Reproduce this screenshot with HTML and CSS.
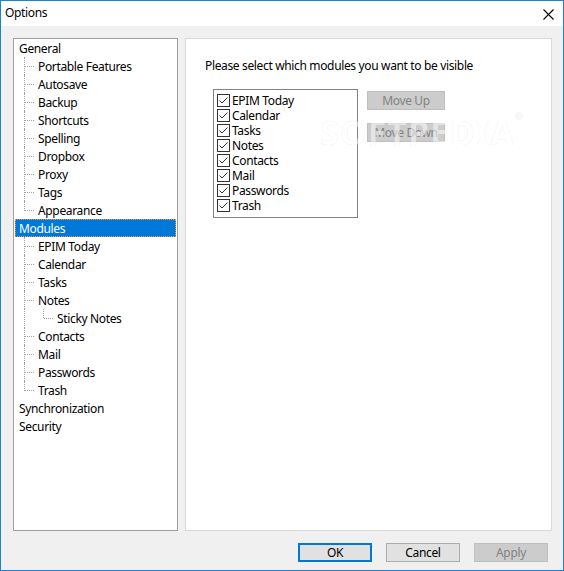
FILE: index.html
```html
<!DOCTYPE html>
<html>
<head>
<meta charset="utf-8">
<link rel="stylesheet" href="styles.css">
</head>
<body>
<div class="window">
  <div class="titlebar">
    <span class="title">Options</span>
    <svg class="close" width="11" height="11" viewBox="0 0 11 11"><path d="M0.5 0.5 L10.5 10.5 M10.5 0.5 L0.5 10.5" stroke="#000" stroke-width="1.1" fill="none"/></svg>
  </div>
  <div class="content">
    <div class="panels">
      <div class="tree">
        <div class="row top">General</div>
        <div class="row child">Portable Features</div>
        <div class="row child">Autosave</div>
        <div class="row child">Backup</div>
        <div class="row child">Shortcuts</div>
        <div class="row child">Spelling</div>
        <div class="row child">Dropbox</div>
        <div class="row child">Proxy</div>
        <div class="row child">Tags</div>
        <div class="row child last">Appearance</div>
        <div class="row top selected"><span class="sel">Modules</span></div>
        <div class="row child">EPIM Today</div>
        <div class="row child">Calendar</div>
        <div class="row child">Tasks</div>
        <div class="row child">Notes</div>
        <div class="row grand">Sticky Notes</div>
        <div class="row child">Contacts</div>
        <div class="row child">Mail</div>
        <div class="row child">Passwords</div>
        <div class="row child last">Trash</div>
        <div class="row top">Synchronization</div>
        <div class="row top">Security</div>
      </div>
      <div class="page">
        <div class="prompt">Please select which modules you want to be visible</div>
        <div class="modules">
          <div class="checklist">
            <div class="item"><svg class="cb" width="13" height="13" viewBox="0 0 13 13"><rect x="0.5" y="0.5" width="12" height="12" fill="#fff" stroke="#333"/><path d="M2.5 6.5 L5 9 L10.5 3.5" stroke="#333" stroke-width="1" fill="none"/></svg><span>EPIM Today</span></div>
            <div class="item"><svg class="cb" width="13" height="13" viewBox="0 0 13 13"><rect x="0.5" y="0.5" width="12" height="12" fill="#fff" stroke="#333"/><path d="M2.5 6.5 L5 9 L10.5 3.5" stroke="#333" stroke-width="1" fill="none"/></svg><span>Calendar</span></div>
            <div class="item"><svg class="cb" width="13" height="13" viewBox="0 0 13 13"><rect x="0.5" y="0.5" width="12" height="12" fill="#fff" stroke="#333"/><path d="M2.5 6.5 L5 9 L10.5 3.5" stroke="#333" stroke-width="1" fill="none"/></svg><span>Tasks</span></div>
            <div class="item"><svg class="cb" width="13" height="13" viewBox="0 0 13 13"><rect x="0.5" y="0.5" width="12" height="12" fill="#fff" stroke="#333"/><path d="M2.5 6.5 L5 9 L10.5 3.5" stroke="#333" stroke-width="1" fill="none"/></svg><span>Notes</span></div>
            <div class="item"><svg class="cb" width="13" height="13" viewBox="0 0 13 13"><rect x="0.5" y="0.5" width="12" height="12" fill="#fff" stroke="#333"/><path d="M2.5 6.5 L5 9 L10.5 3.5" stroke="#333" stroke-width="1" fill="none"/></svg><span>Contacts</span></div>
            <div class="item"><svg class="cb" width="13" height="13" viewBox="0 0 13 13"><rect x="0.5" y="0.5" width="12" height="12" fill="#fff" stroke="#333"/><path d="M2.5 6.5 L5 9 L10.5 3.5" stroke="#333" stroke-width="1" fill="none"/></svg><span>Mail</span></div>
            <div class="item"><svg class="cb" width="13" height="13" viewBox="0 0 13 13"><rect x="0.5" y="0.5" width="12" height="12" fill="#fff" stroke="#333"/><path d="M2.5 6.5 L5 9 L10.5 3.5" stroke="#333" stroke-width="1" fill="none"/></svg><span>Passwords</span></div>
            <div class="item"><svg class="cb" width="13" height="13" viewBox="0 0 13 13"><rect x="0.5" y="0.5" width="12" height="12" fill="#fff" stroke="#333"/><path d="M2.5 6.5 L5 9 L10.5 3.5" stroke="#333" stroke-width="1" fill="none"/></svg><span>Trash</span></div>
          </div>
          <div class="side">
            <div class="btn disabled">Move Up</div>
            <div class="btn disabled">Move Down</div>
          </div>
        </div>
        <div class="watermark">SOFTPEDIA<sup>®</sup></div>
      </div>
    </div>
    <div class="buttons">
      <div class="btn dlg default">OK</div>
      <div class="btn dlg">Cancel</div>
      <div class="btn dlg disabled">Apply</div>
    </div>
  </div>
</div>
</body>
</html>
```

FILE: styles.css
```css
* { box-sizing: border-box; }
html, body { margin: 0; padding: 0; background: #f0f0f0; }
body {
  font-family: "Noto Sans", "Open Sans", sans-serif;
  font-size: 12px;
  letter-spacing: -0.35px;
  color: #000;
}
.window {
  width: 564px;
  height: 571px;
  border: 1px solid #1883d7;
  background: #f0f0f0;
  display: flex;
  flex-direction: column;
}
.titlebar {
  height: 25px;
  background: #fff;
  display: flex;
  align-items: center;
  justify-content: space-between;
  padding: 0 9px 0 4px;
  flex: none;
}
.title { font-size: 12px; line-height: 16px; margin-top: -1px; }
.close { display: block; margin-top: 2px; }
.content {
  flex: 1;
  padding: 12px 11px 0 12px;
  display: flex;
  flex-direction: column;
}
.panels {
  display: flex;
  gap: 7px;
  height: 493px;
}
.tree {
  width: 165px;
  height: 493px;
  background: #fff;
  border: 1px solid #a0a0a0;
}
.row {
  height: 18px;
  padding-top: 2px;
  line-height: 16px;
  white-space: nowrap;
  position: relative;
}
.row.top { padding-left: 5px; }
.row.child { padding-left: 24px; }
.row.grand { padding-left: 43px; }
.row.child::before, .row.grand::before {
  content: "";
  position: absolute;
  top: 9px;
  width: 9px;
  border-top: 1px dotted #a0a0a0;
}
.row.child::before { left: 11px; }
.row.grand::before { left: 30px; }
.row.child::after, .row.grand::after {
  content: "";
  position: absolute;
  top: 0;
  height: 18px;
  border-left: 1px dotted #a0a0a0;
}
.row.child::after { left: 10px; }
.row.grand::after { left: 29px; height: 9px; }
.row.child.last::after { height: 10px; }
.row.grand {
  background-image: linear-gradient(#a0a0a0 50%, transparent 50%);
  background-size: 1px 2px;
  background-repeat: repeat-y;
  background-position: 10px 0;
}
.row.selected {
  padding-left: 1px;
  padding-top: 0;
}
.sel {
  display: block;
  width: 161px;
  height: 18px;
  padding-top: 1px;
  line-height: 16px;
  background: #0078d7;
  color: #fff;
  padding-left: 3px;
  border: 1px dotted #e8a040;
}
.page {
  width: 367px;
  height: 493px;
  background: #fff;
  border: 1px solid #d9d9d9;
  padding: 19px 0 0 19px;
  position: relative;
}
.prompt { line-height: 15px; white-space: nowrap; }
.modules {
  display: flex;
  align-items: flex-start;
  margin-top: 16px;
  margin-left: 8px;
  gap: 9px;
}
.checklist {
  width: 145px;
  height: 129px;
  border: 1px solid #828282;
  background: #fff;
  padding: 3px 0 0 3px;
}
.item {
  height: 15px;
  display: flex;
  align-items: center;
  line-height: 15px;
}
.cb { display: block; flex: none; margin-right: 2px; }
.side {
  display: flex;
  flex-direction: column;
  gap: 13px;
  margin-top: 2px;
}
.btn {
  width: 78px;
  height: 19px;
  line-height: 17px;
  text-align: center;
  border: 1px solid #adadad;
  background: #e1e1e1;
  color: #000;
}
.btn.disabled {
  background: #cccccc;
  border-color: #bfbfbf;
  color: #838383;
}
.watermark {
  position: absolute;
  left: 134px;
  top: 70px;
  font-size: 34px;
  font-weight: bold;
  letter-spacing: 1px;
  color: rgba(255,255,255,0.5);
  -webkit-text-stroke: 1px rgba(0,0,0,0.05);
  pointer-events: none;
}
.watermark sup { font-size: 10px; vertical-align: top; }
.buttons {
  display: flex;
  justify-content: flex-end;
  gap: 14px;
  margin-top: 12px;
  padding-right: 4px;
}
.btn.dlg { width: 74px; }
.btn.default { border: 2px solid #0078d7; line-height: 15px; }
```
